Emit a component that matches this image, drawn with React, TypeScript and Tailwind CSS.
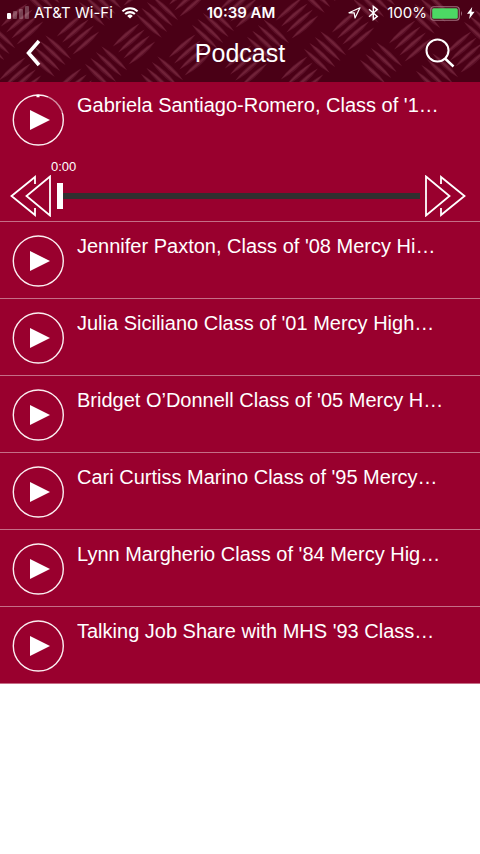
import React from "react";

const episodes = [
  "Jennifer Paxton, Class of '08 Mercy Hi…",
  "Julia Siciliano Class of '01 Mercy High…",
  "Bridget O’Donnell Class of '05 Mercy H…",
  "Cari Curtiss Marino Class of '95 Mercy…",
  "Lynn Margherio Class of '84 Mercy Hig…",
  "Talking Job Share with MHS '93 Class…",
];

// Centres of the raised bar groups on the tread plate, by lean direction.
const leftLeaning = [
  [-6, 45], [50, 56], [106, 67], [162, 77],
  [44, -6], [100, 5], [157, 17], [213, 28], [268, 40], [325, 52], [381, 63], [437, 74],
  [320, -8], [374, 2], [430, 13], [485, 25],
];
const rightLeaning = [
  [20, 78], [76, 89],
  [-34, 13], [22, 24], [78, 34], [134, 44], [190, 55], [246, 66], [302, 77],
  [129, -15], [185, -4], [241, 7], [297, 18], [353, 30], [410, 41], [466, 52],
];

function TreadPlate() {
  const bars = [-12, -4, 4, 12];
  return (
    <svg
      aria-hidden="true"
      className="absolute inset-0 h-full w-full"
      viewBox="0 0 480 82"
      preserveAspectRatio="xMidYMid slice"
    >
      <defs>
        <g id="bars">
          {bars.map((y) => (
            <g key={y}>
              <path d={`M-18 ${y}Q0 ${y - 5} 18 ${y}Q0 ${y + 5} -18 ${y}Z`} fill="#5c1028" />
              <path d={`M-17 ${y}Q0 ${y - 3} 17 ${y}Q0 ${y + 2} -17 ${y}Z`} fill="#702238" />
            </g>
          ))}
        </g>
      </defs>
      <rect width="480" height="82" fill="#4a0016" />
      {leftLeaning.map(([x, y]) => (
        <use key={`l${x}`} href="#bars" transform={`translate(${x} ${y}) rotate(43)`} />
      ))}
      {rightLeaning.map(([x, y]) => (
        <use key={`r${x}`} href="#bars" transform={`translate(${x} ${y}) rotate(-41)`} />
      ))}
    </svg>
  );
}

function StatusBar() {
  return (
    <div className="grid h-[26px] grid-cols-[1fr_auto_1fr] items-center pl-[7px] pr-[5px] font-['Inter',sans-serif] text-[15px] leading-5">
      <div className="flex items-center gap-[5px]">
        <svg width="22" height="14" viewBox="0 0 22 14" fill="#fff" aria-hidden="true">
          <rect x="0" y="7" width="4" height="6" rx="1" />
          <g opacity=".25">
            <rect x="6" y="5" width="4" height="8" rx="1" />
            <rect x="12" y="3" width="4" height="10" rx="1" />
            <rect x="18" y="0" width="4" height="13" rx="1" />
          </g>
        </svg>
        <span>AT&amp;T Wi-Fi</span>
        <svg className="ml-[3px]" width="18" height="14" viewBox="0 0 20 14" aria-hidden="true">
          <g fill="none" stroke="#fff" strokeWidth="2.3">
            <path d="M1.6 5.2a12 12 0 0 1 16.8 0" />
            <path d="M4.6 8.2a7.8 7.8 0 0 1 10.8 0" />
          </g>
          <path d="M10 13.2 6.9 10.2a4.5 4.5 0 0 1 6.2 0Z" fill="#fff" />
        </svg>
      </div>
      <span className="font-semibold">10:39 AM</span>
      <div className="flex items-center justify-end">
        <svg width="13" height="12" viewBox="0 0 13 12" fill="none" stroke="#fff" strokeWidth="1.2" strokeLinejoin="round" aria-hidden="true">
          <path d="M12 .8 1 5.8h5.2L7 11Z" />
        </svg>
        <svg className="ml-[7px]" width="11" height="16" viewBox="0 0 11 16" fill="none" stroke="#fff" strokeWidth="1.4" aria-hidden="true">
          <path d="M1 4.3 9.3 11.4 5.3 14.6V1.4L9.3 4.6 1 11.7" />
        </svg>
        <span className="ml-[8px]">100%</span>
        <svg className="ml-[3px]" width="33" height="15" viewBox="0 0 33 15" aria-hidden="true">
          <rect x=".75" y=".75" width="28.5" height="13.5" rx="3" fill="none" stroke="#a06f7e" strokeWidth="1.2" />
          <rect x="2.2" y="2.2" width="25.6" height="10.6" rx="1.5" fill="#4cd964" />
          <path d="M31 5q2 2.5 0 5Z" fill="#a06f7e" />
        </svg>
        <svg className="ml-[4px]" width="8" height="12" viewBox="0 0 8 12" fill="#fff" aria-hidden="true">
          <path d="M5.2 0 0 6.8h3L2.2 12 7.6 4.8H4.5Z" />
        </svg>
      </div>
    </div>
  );
}

function PlayButton({ title, loading = false }: { title: string; loading?: boolean }) {
  return (
    <button type="button" aria-label={`Play ${title}`} className="h-[52px] w-[52px] shrink-0">
      <svg width="52" height="52" viewBox="0 0 52 52" aria-hidden="true">
        <circle cx="26.3" cy="26" r="25" fill="none" stroke="#fbeef1" strokeWidth="1.4" />
        {loading && (
          <>
            <path d="M36 3A25 25 0 0 1 50 19" fill="none" stroke="#99002e" strokeWidth="2" opacity=".4" />
            <path d="M24.5 2h3" stroke="#fff" strokeWidth="2.5" />
          </>
        )}
        <path d="M18 16v20L38 26Z" fill="#fff" />
      </svg>
    </button>
  );
}

function SkipIcon({ forward = false }: { forward?: boolean }) {
  return (
    <svg width="42" height="42" viewBox="0 0 42 42" fill="none" stroke="#fff" strokeWidth="1.8" aria-hidden="true">
      <g transform={forward ? "translate(42 0) scale(-1 1)" : undefined}>
        <path d="M40 1.5v39L16.5 21Z" />
        <path d="M25 9V2L1.5 21 25 40V33" />
      </g>
    </svg>
  );
}

function Title({ children }: { children: string }) {
  return <h2 className="min-w-0 overflow-hidden whitespace-nowrap text-[20px] leading-[22px]">{children}</h2>;
}

const current = "Gabriela Santiago-Romero, Class of '1…";

export default function App() {
  return (
    <div className="min-h-screen bg-white font-['Liberation_Sans',Arial,sans-serif] text-white">
      <header className="relative overflow-hidden bg-[#4a0016]">
        <TreadPlate />
        <div className="relative pb-[2px]">
          <StatusBar />
          <div className="grid h-[54px] grid-cols-[1fr_auto_1fr] items-center px-6">
            <button type="button" aria-label="Back" className="justify-self-start">
              <svg width="18" height="28" viewBox="0 0 18 28" fill="none" stroke="#fff" strokeWidth="3.5" aria-hidden="true">
                <path d="M15 2 4.5 14 15 26" />
              </svg>
            </button>
            <h1 className="text-[25px] leading-8">Podcast</h1>
            <button type="button" aria-label="Search" className="justify-self-end">
              <svg width="32" height="30" viewBox="0 0 32 30" fill="none" stroke="#fff" aria-hidden="true">
                <circle cx="13.5" cy="12.5" r="11" strokeWidth="2" />
                <path d="M21 20.5 29.5 28.5" strokeWidth="2.5" />
              </svg>
            </button>
          </div>
        </div>
      </header>
      <main>
        <ul className="bg-[#99002e]">
          <li className="border-b border-[#c56e87] pb-1">
            <div className="flex gap-[13px] px-3 pt-[12px]">
              <PlayButton title={current} loading />
              <Title>{current}</Title>
            </div>
            <div className="px-[10px] pt-[13px]">
              <label htmlFor="position" className="block pl-[41px] text-[13px] leading-4">
                0:00
              </label>
              <div className="flex items-center">
                <button type="button" aria-label="Rewind">
                  <SkipIcon />
                </button>
                <input
                  id="position"
                  type="range"
                  min={0}
                  max={100}
                  defaultValue={0}
                  className="ml-[5px] mr-[4px] h-[26px] min-w-0 flex-1 appearance-none bg-transparent [&::-webkit-slider-runnable-track]:h-[6px] [&::-webkit-slider-runnable-track]:bg-[#303030] [&::-webkit-slider-thumb]:-mt-[10px] [&::-webkit-slider-thumb]:h-[26px] [&::-webkit-slider-thumb]:w-[6px] [&::-webkit-slider-thumb]:appearance-none [&::-webkit-slider-thumb]:bg-white"
                />
                <button type="button" aria-label="Fast forward" className="mr-[4px]">
                  <SkipIcon forward />
                </button>
              </div>
            </div>
          </li>
          {episodes.map((title) => (
            <li key={title} className="flex h-[77px] gap-[13px] border-b border-[#c56e87] px-3 pt-[13px]">
              <PlayButton title={title} />
              <Title>{title}</Title>
            </li>
          ))}
        </ul>
      </main>
    </div>
  );
}
